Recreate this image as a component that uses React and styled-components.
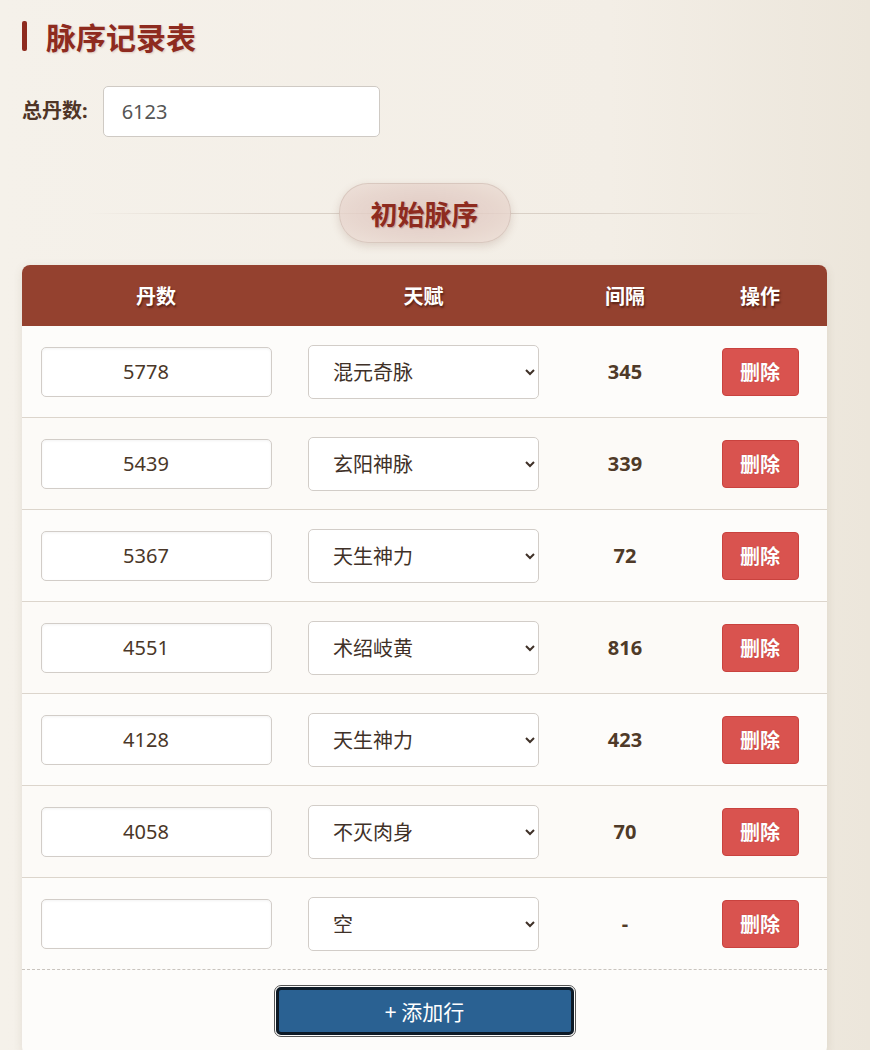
import { useState } from "react";
import styled, { createGlobalStyle } from "styled-components";

const TALENTS = ["空", "混元奇脉", "玄阳神脉", "天生神力", "术绍岐黄", "不灭肉身"];

const GlobalStyle = createGlobalStyle`
  body {
    margin: 0;
    background: linear-gradient(90deg, #f5f1ea 0%, #f3eee6 70%, #ece6db 100%);
    font-family: "Noto Sans", "Noto Sans CJK SC", sans-serif;
    color: #4a3728;
  }
`;

const Page = styled.div`
  width: 805px;
  padding: 18px 0 0 22px;
`;

const Title = styled.h1`
  display: flex;
  align-items: center;
  gap: 19px;
  margin: 0;
  height: 36px;
  font-size: 30px;
  font-weight: 700;
  color: #8e2b1f;
  text-shadow: 1px 1px 2px rgba(120, 40, 20, 0.2);

  &::before {
    content: "";
    width: 5px;
    height: 30px;
    border-radius: 2px;
    background: #8e2b1f;
  }
`;

const TotalRow = styled.div`
  display: flex;
  align-items: center;
  gap: 15px;
  margin-top: 32px;
`;

const Label = styled.label`
  font-size: 20px;
  font-weight: 700;
  color: #4f3526;
  margin-top: -4px;
`;

const TotalInput = styled.input`
  box-sizing: border-box;
  width: 277px;
  height: 51px;
  padding: 0 18px;
  border: 1px solid #cfcac4;
  border-radius: 5px;
  background: #fff;
  font: 400 20px "Noto Sans", "Noto Sans CJK SC", sans-serif;
  color: #555;
  outline: none;
`;

const Section = styled.div`
  display: flex;
  justify-content: center;
  align-items: center;
  height: 58px;
  margin-top: 47px;
  background: linear-gradient(
      90deg,
      transparent 8%,
      #d9d0c6 30%,
      #d9d0c6 70%,
      transparent 93%
    )
    center / 100% 1px no-repeat;
`;

const Pill = styled.div`
  display: flex;
  align-items: center;
  justify-content: center;
  width: 170px;
  height: 58px;
  border-radius: 29px;
  background: radial-gradient(
    ellipse at 50% 50%,
    rgba(222, 196, 188, 0.85) 0%,
    rgba(228, 208, 200, 0.8) 60%,
    rgba(236, 222, 214, 0.8) 100%
  );
  border: 1px solid rgba(200, 180, 170, 0.5);
  box-shadow: 0 3px 8px rgba(120, 80, 60, 0.18);
  font-size: 27px;
  font-weight: 700;
  color: #8e2b1f;
  text-shadow: 1px 1px 1px rgba(90, 20, 10, 0.25);
`;

const Card = styled.div`
  margin-top: 23px;
  border-radius: 8px;
  overflow: hidden;
  background: #fdfcfa;
  box-shadow: 0 2px 10px rgba(100, 80, 60, 0.12);
`;

const Grid = styled.div`
  display: grid;
  grid-template-columns: 268px 267px 136px 134px;
  align-items: center;
`;

const HeadRow = styled(Grid)`
  height: 61px;
  background: #94412f;
`;

const HeadCell = styled.div`
  text-align: center;
  font-size: 20px;
  font-weight: 700;
  color: #fff;
  text-shadow: 1px 2px 2px rgba(40, 10, 0, 0.55);
`;

const Row = styled(Grid)`
  height: 91px;
  border-bottom: 1px ${(p) => (p.$last ? "dashed #c9c4be" : "solid #dcd5cc")};
  background: ${(p) => (p.$alt ? "#fcfaf7" : "#fdfcfa")};
`;

const Cell = styled.div`
  display: flex;
  justify-content: center;
  align-items: center;
  padding: 0 18px;
`;

const NumInput = styled.input`
  box-sizing: border-box;
  width: 231px;
  height: 50px;
  padding: 0 30px 0 10px;
  border: 1px solid #d2cdc8;
  border-radius: 5px;
  background: #fff;
  box-shadow: inset 0 1px 3px rgba(0, 0, 0, 0.05);
  text-align: center;
  font: 400 20px "Noto Sans", "Noto Sans CJK SC", sans-serif;
  color: #4a3728;
  outline: none;
`;

const Select = styled.select`
  box-sizing: border-box;
  width: 231px;
  height: 54px;
  padding: 0 10px 0 20px;
  border: 1px solid #d2cdc8;
  border-radius: 5px;
  background: #fff;
  font: 400 20px "Noto Sans CJK SC", sans-serif;
  color: #3f3128;
  outline: none;
`;

const Gap = styled.div`
  text-align: center;
  font-size: 20px;
  font-weight: 700;
  color: #4f3a28;
`;

const DeleteButton = styled.button`
  width: 77px;
  height: 48px;
  border: 1px solid #c9423e;
  border-radius: 4px;
  background: #d9534f;
  color: #fff;
  font: 700 20px "Noto Sans CJK SC", sans-serif;
  text-shadow: 0 0 1px rgba(120, 20, 20, 0.4);
  cursor: pointer;
`;

const Footer = styled.div`
  display: flex;
  justify-content: center;
  padding: 17px 0 20px;
`;

const AddButton = styled.button`
  width: 298px;
  height: 48px;
  border: 3px solid #0d1a26;
  border-radius: 5px;
  outline: 1px solid #555;
  outline-offset: 1px;
  background: #2a6192;
  color: #fff;
  font: 400 21px "Noto Sans CJK SC", sans-serif;
  cursor: pointer;
`;

const initialRows = [
  { dan: "5778", talent: "混元奇脉" },
  { dan: "5439", talent: "玄阳神脉" },
  { dan: "5367", talent: "天生神力" },
  { dan: "4551", talent: "术绍岐黄" },
  { dan: "4128", talent: "天生神力" },
  { dan: "4058", talent: "不灭肉身" },
  { dan: "", talent: "空" },
];

export default function App() {
  const [total, setTotal] = useState("6123");
  const [rows, setRows] = useState(initialRows);

  const update = (i, key, value) =>
    setRows((prev) => prev.map((r, j) => (j === i ? { ...r, [key]: value } : r)));

  const gapOf = (i) => {
    const cur = Number(rows[i].dan);
    const prev = i === 0 ? Number(total) : Number(rows[i - 1].dan);
    if (!rows[i].dan || !prev) return "-";
    return prev - cur;
  };

  return (
    <Page>
      <GlobalStyle />
      <Title>脉序记录表</Title>
      <TotalRow>
        <Label>总丹数:</Label>
        <TotalInput value={total} onChange={(e) => setTotal(e.target.value)} />
      </TotalRow>
      <Section>
        <Pill>初始脉序</Pill>
      </Section>
      <Card>
        <HeadRow>
          <HeadCell>丹数</HeadCell>
          <HeadCell>天赋</HeadCell>
          <HeadCell>间隔</HeadCell>
          <HeadCell>操作</HeadCell>
        </HeadRow>
        {rows.map((row, i) => (
          <Row key={i} $alt={i % 2 === 1} $last={i === rows.length - 1}>
            <Cell>
              <NumInput
                inputMode="numeric"
                value={row.dan}
                onChange={(e) => update(i, "dan", e.target.value)}
              />
            </Cell>
            <Cell>
              <Select
                value={row.talent}
                onChange={(e) => update(i, "talent", e.target.value)}
              >
                {TALENTS.map((t) => (
                  <option key={t}>{t}</option>
                ))}
              </Select>
            </Cell>
            <Gap>{gapOf(i)}</Gap>
            <Cell>
              <DeleteButton
                onClick={() => setRows((prev) => prev.filter((_, j) => j !== i))}
              >
                删除
              </DeleteButton>
            </Cell>
          </Row>
        ))}
        <Footer>
          <AddButton
            onClick={() => setRows((prev) => [...prev, { dan: "", talent: "空" }])}
          >
            + 添加行
          </AddButton>
        </Footer>
      </Card>
    </Page>
  );
}
